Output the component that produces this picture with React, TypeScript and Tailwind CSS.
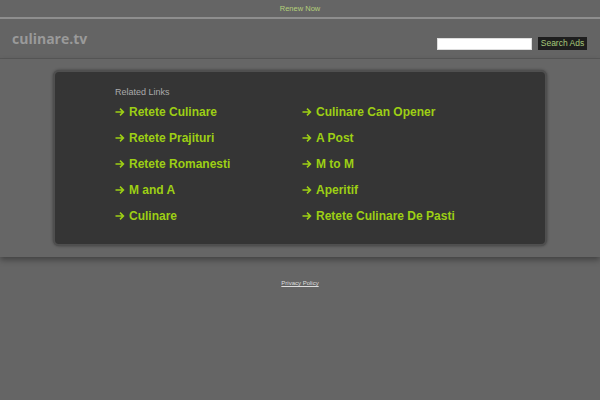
import React from "react";

const left = ["Retete Culinare", "Retete Prajituri", "Retete Romanesti", "M and A", "Culinare"];
const right = ["Culinare Can Opener", "A Post", "M to M", "Aperitif", "Retete Culinare De Pasti"];

function Arrow() {
  return (
    <svg width="14" height="10" viewBox="0 0 14 10" className="shrink-0">
      <path d="M0.5 5H8.2M5 1.6L8.4 5L5 8.4" fill="none" stroke="currentColor" strokeWidth="1.6" strokeLinecap="butt" strokeLinejoin="miter" />
    </svg>
  );
}

function Link({ label }: { label: string }) {
  return (
    <div className="flex h-[26px] items-center text-[12px] font-bold text-[#9dcf14]">
      <Arrow />
      <span>{label}</span>
    </div>
  );
}

export default function App() {
  return (
    <div className="h-[400px] w-[600px] overflow-hidden bg-[#656565] font-['Liberation_Sans',Arial,sans-serif]">
      <div className="flex h-[19px] items-center justify-center border-b-2 border-[#8e8e8e] text-[7.5px] text-[#b4d07a]">
        Renew Now
      </div>
      <div className="flex h-[40px] items-start justify-between border-b border-[#585858] bg-[#646464] px-3">
        <div className="mt-[9px] font-['Open_Sans',sans-serif] text-[14px] font-bold text-[#9a9a9a]">culinare.tv</div>
        <div className="mt-[18px] flex items-center gap-[6px] pr-[1px]">
          <div className="h-[12px] w-[95px] border border-[#ddd] bg-white" />
          <div className="flex h-[13px] w-[49px] items-center justify-center bg-[#1e1e1e] text-[8.5px] text-[#a6c97a]">
            Search Ads
          </div>
        </div>
      </div>
      <div className="bg-[#666666] px-[53px] pb-[11px] pt-[11px] shadow-[0_3px_6px_rgba(0,0,0,0.35)]">
        <div className="h-[176px] rounded-[6px] border-2 border-[#4f4f4f] bg-[#353535] pl-[60px] pt-[15px] shadow-[0_0_3px_rgba(0,0,0,0.4)]">
          <div className="h-[12px] text-[9px] leading-[10px] text-[#aaaaaa]">Related Links</div>
          <div className="flex">
            <div className="w-[187px]">
              {left.map((l) => (
                <Link key={l} label={l} />
              ))}
            </div>
            <div>
              {right.map((l) => (
                <Link key={l} label={l} />
              ))}
            </div>
          </div>
        </div>
      </div>
      <div className="mt-[22px] flex justify-center">
        <span className="text-[6px] text-[#dddddd] underline">Privacy Policy</span>
      </div>
    </div>
  );
}
